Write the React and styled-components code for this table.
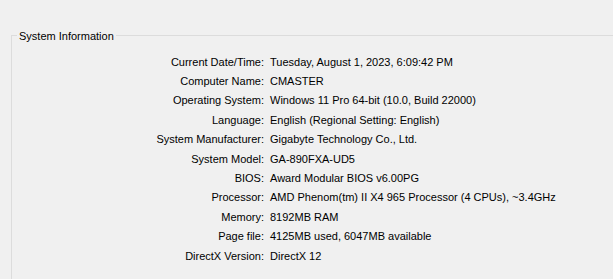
import React from "react";
import styled, { createGlobalStyle } from "styled-components";

const Global = createGlobalStyle`
  html, body { margin: 0; padding: 0; background: #f0f0f0; }
  body { font-family: "Liberation Sans", Arial, sans-serif; font-size: 11px; color: #000; }
`;

const Page = styled.div`
  width: 613px;
  height: 279px;
  overflow: hidden;
  padding-top: 28px;
  padding-left: 11px;
  box-sizing: border-box;
`;

const Group = styled.fieldset`
  margin: 0;
  padding: 9px 0 0 0;
  width: 640px;
  height: 300px;
  border: 1px solid #dcdcdc;
  box-sizing: border-box;
`;

const Legend = styled.legend`
  margin-left: 5px;
  padding: 2px 2px 0 2px;
  font-size: 11px;
  line-height: 13px;
`;

const Grid = styled.div`
  display: grid;
  grid-template-columns: 252px auto;
  grid-auto-rows: 19.4px;
  column-gap: 6px;
  align-items: center;
`;

const Label = styled.div`
  text-align: right;
  white-space: nowrap;
`;

const Value = styled.div`
  white-space: nowrap;
`;

const rows = [
  ["Current Date/Time:", "Tuesday, August 1, 2023, 6:09:42 PM"],
  ["Computer Name:", "CMASTER"],
  ["Operating System:", "Windows 11 Pro 64-bit (10.0, Build 22000)"],
  ["Language:", "English (Regional Setting: English)"],
  ["System Manufacturer:", "Gigabyte Technology Co., Ltd."],
  ["System Model:", "GA-890FXA-UD5"],
  ["BIOS:", "Award Modular BIOS v6.00PG"],
  ["Processor:", "AMD Phenom(tm) II X4 965 Processor (4 CPUs), ~3.4GHz"],
  ["Memory:", "8192MB RAM"],
  ["Page file:", "4125MB used, 6047MB available"],
  ["DirectX Version:", "DirectX 12"],
];

export default function App() {
  return (
    <Page>
      <Global />
      <Group>
        <Legend>System Information</Legend>
        <Grid>
          {rows.map(([l, v]) => (
            <React.Fragment key={l}>
              <Label>{l}</Label>
              <Value>{v}</Value>
            </React.Fragment>
          ))}
        </Grid>
      </Group>
    </Page>
  );
}
